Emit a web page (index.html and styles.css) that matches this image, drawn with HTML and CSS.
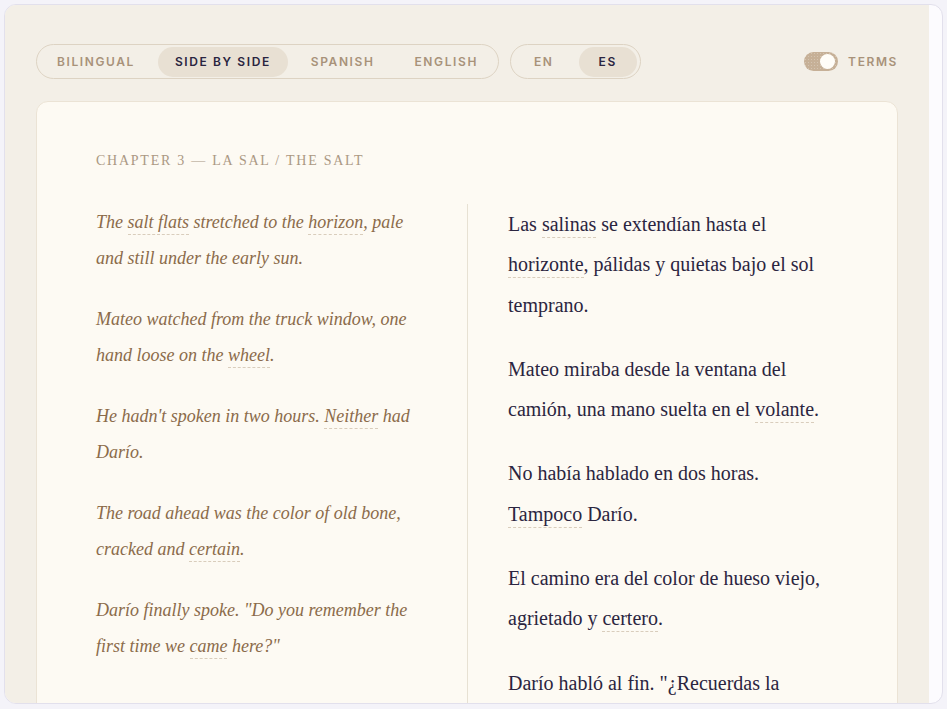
FILE: index.html
```html
<!DOCTYPE html>
<html lang="en">
<head>
<meta charset="utf-8">
<title>La Sal / The Salt</title>
<link rel="stylesheet" href="styles.css">
</head>
<body>
<div class="frame">
  <div class="app">
    <div class="toolbar">
      <div class="seg">
        <button class="seg-item">Bilingual</button>
        <button class="seg-item active">Side by side</button>
        <button class="seg-item">Spanish</button>
        <button class="seg-item">English</button>
      </div>
      <div class="seg lang">
        <button class="seg-item">EN</button>
        <button class="seg-item active">ES</button>
      </div>
      <div class="terms">
        <span class="switch"><span class="knob"></span></span>
        <span class="terms-label">Terms</span>
      </div>
    </div>
    <article class="card">
      <h2 class="chapter">Chapter 3 — La Sal / The Salt</h2>
      <div class="columns">
        <div class="col en">
          <p>The <span class="term">salt flats</span> stretched to the <span class="term">horizon</span>, pale and still under the early sun.</p>
          <p>Mateo watched from the truck window, one hand loose on the <span class="term">wheel</span>.</p>
          <p>He hadn't spoken in two hours. <span class="term">Neither</span> had Darío.</p>
          <p>The road ahead was the color of old bone, cracked and <span class="term">certain</span>.</p>
          <p>Darío finally spoke. "Do you remember the first time we <span class="term">came</span> here?"</p>
        </div>
        <div class="col es">
          <p>Las <span class="term">salinas</span> se extendían hasta el <span class="term">horizonte</span>, pálidas y quietas bajo el sol temprano.</p>
          <p>Mateo miraba desde la ventana del camión, una mano suelta en el <span class="term">volante</span>.</p>
          <p>No había hablado en dos horas. <span class="term">Tampoco</span> Darío.</p>
          <p>El camino era del color de hueso viejo, agrietado y <span class="term">certero</span>.</p>
          <p>Darío habló al fin. "¿Recuerdas la primera vez que <span class="term">vinimos</span> aquí?"</p>
        </div>
      </div>
    </article>
  </div>
</div>
</body>
</html>
```

FILE: styles.css
```css
* { box-sizing: border-box; }
html, body { margin: 0; padding: 0; }
body {
  background: #f4f3f9;
  font-family: "Liberation Serif", serif;
}
.frame {
  margin: 4px;
  width: 939px;
  height: 700px;
  border: 1px solid #e2e0ec;
  border-radius: 12px;
  overflow: hidden;
  background: #fcfbfe;
}
.app {
  width: 924px;
  height: 100%;
  overflow: hidden;
  background: #f3efe7;
  padding: 39px 31px 0 31px;
}
.toolbar {
  display: flex;
  align-items: center;
  gap: 11px;
  height: 35px;
}
.seg {
  display: flex;
  align-items: center;
  gap: 6px;
  height: 35px;
  padding: 0 3px;
  border: 1px solid #ddd3c3;
  border-radius: 999px;
}
.seg-item {
  border: 0;
  background: transparent;
  height: 30px;
  padding: 0 17px;
  border-radius: 999px;
  font-family: Inter, "Liberation Sans", sans-serif;
  font-size: 12px;
  font-weight: 600;
  letter-spacing: 1.6px;
  text-transform: uppercase;
  color: #a8927a;
  cursor: pointer;
}
.seg-item.active {
  background: #e8e0d3;
  color: #2a2440;
}
.seg.lang { gap: 5px; }
.lang .seg-item { padding: 0 20px; }
.terms {
  margin-left: auto;
  display: flex;
  align-items: center;
  gap: 10px;
}
.switch {
  position: relative;
  width: 34px;
  height: 19px;
  border-radius: 999px;
  background: #c6b097;
  background-image: radial-gradient(rgba(255,255,255,0.25) 0.6px, transparent 0.9px);
  background-size: 3px 3px;
}
.knob {
  position: absolute;
  top: 2px;
  right: 3px;
  width: 15px;
  height: 15px;
  border-radius: 50%;
  background: #fffdf8;
}
.terms-label {
  font-family: Inter, "Liberation Sans", sans-serif;
  font-size: 12px;
  font-weight: 600;
  letter-spacing: 1.6px;
  text-transform: uppercase;
  color: #a8927a;
}
.card {
  margin-top: 22px;
  background: #fdfaf3;
  border: 1px solid #ebe3d5;
  border-radius: 12px;
  padding: 49px 59px 40px 59px;
  min-height: 700px;
}
.chapter {
  margin: 0 0 33px 0;
  font-family: "Liberation Serif", serif;
  font-weight: 400;
  font-size: 14px;
  line-height: 20px;
  letter-spacing: 1.75px;
  text-transform: uppercase;
  color: #ab9883;
}
.columns {
  display: grid;
  grid-template-columns: 1fr 1fr;
}
.col p { margin: 0; }
.col.en {
  padding-right: 40px;
  font-style: italic;
  font-size: 18px;
  line-height: 36px;
  color: #8b6b4a;
}
.col.en p { margin-bottom: 25px; }
.col.es {
  border-left: 1px solid #e7e1d3;
  padding-left: 40px;
  padding-right: 6px;
  font-size: 20px;
  line-height: 40.3px;
  color: #2b2540;
}
.col.es p { margin-bottom: 24px; }
.term {
  border-bottom: 1.5px dashed #d9cdbc;
  padding-bottom: 2px;
}
```
